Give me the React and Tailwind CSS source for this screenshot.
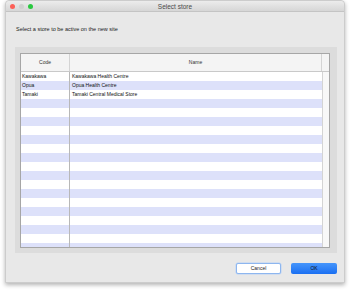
import React from 'react'

// ── Data ──────────────────────────────────────────────────────────────────────

const stores = [
  { code: 'Kawakawa', name: 'Kawakawa Health Centre' },
  { code: 'Opua', name: 'Opua Health Centre' },
  { code: 'Tamaki', name: 'Tamaki Central Medical Store' },
]

const ROW_COUNT = 20

// ── Title bar ─────────────────────────────────────────────────────────────────

function TitleBar() {
  return (
    <div className="relative flex h-[11px] items-center rounded-t-[4px] border-b border-[#c4c4c4] bg-gradient-to-b from-[#ececec] to-[#d6d6d6] px-[4px]">
      <div className="flex gap-[4px]">
        <span className="h-[5px] w-[5px] rounded-full bg-[#fc5f57]" />
        <span className="h-[5px] w-[5px] rounded-full bg-[#d0d0d0]" />
        <span className="h-[5px] w-[5px] rounded-full bg-[#2ac840]" />
      </div>
      <span className="absolute inset-x-0 text-center text-[6.5px] leading-[11px] text-[#4a4a4a]">
        Select store
      </span>
    </div>
  )
}

// ── Table ─────────────────────────────────────────────────────────────────────

function StoreTable() {
  const rows = Array.from({ length: ROW_COUNT }, (_, i) => stores[i] ?? null)

  return (
    <div className="flex h-[195px] w-[310px] flex-col border border-[#a6a6a6] bg-white">
      {/* Header */}
      <div className="flex h-[18px] shrink-0 border-b border-[#c9c9c9] bg-[#f4f4f4] text-[5px] text-[#333]">
        <div className="flex w-[49px] items-center justify-center border-r border-[#d4d4d4]">Code</div>
        <div className="flex flex-1 items-center justify-center border-r border-[#d4d4d4]">Name</div>
        <div className="w-[7px]" />
      </div>

      {/* Body */}
      <div className="flex min-h-0 flex-1">
        <div className="flex-1 overflow-hidden">
          {rows.map((store, i) => (
            <div
              key={i}
              className={`flex h-[9px] text-[5px] leading-[9px] text-[#111] ${i % 2 === 1 ? 'bg-[#dde1fa]' : 'bg-white'}`}
            >
              <div className="w-[49px] shrink-0 border-r border-[#b8b8b8] pl-[1px]">{store?.code}</div>
              <div className="flex-1 pl-[2px]">{store?.name}</div>
            </div>
          ))}
        </div>
        <div className="w-[7px] shrink-0 border-l border-[#d4d4d4] bg-[#f8f8f8]" />
      </div>
    </div>
  )
}

// ── Main ──────────────────────────────────────────────────────────────────────

export default function App() {
  return (
    <div className="h-[290px] w-[352px] bg-white font-['Liberation_Sans',Arial,sans-serif]">
      <div className="ml-[5px] flex h-[283px] w-[340px] flex-col rounded-t-[4px] border border-[#cccccc] bg-[#e8e8e8] shadow-[0_2px_4px_rgba(0,0,0,0.3)]">
        <TitleBar />

        <p className="ml-[10px] mt-[14px] text-[5.5px] leading-[6px] text-[#222]">
          Select a store to be active on the new site
        </p>

        {/* Group box */}
        <div className="ml-[9px] mt-[15px] w-[322px] bg-[#dcdcdc] pb-[5px] pl-[5px] pr-[7px] pt-[6px]">
          <StoreTable />
        </div>

        {/* Buttons */}
        <div className="mr-[7px] mt-[10px] flex justify-end gap-[10px]">
          <button className="h-[11px] w-[45px] rounded-[2px] border border-[#8db6ef] bg-white text-[5px] leading-[9px] text-[#222] shadow-[0_0_0_0.5px_#b9d2f5]">
            Cancel
          </button>
          <button className="h-[11px] w-[46px] rounded-[2px] bg-gradient-to-b from-[#4595fb] to-[#1a6ff2] text-[5px] leading-[11px] text-[#111]">
            OK
          </button>
        </div>
      </div>
    </div>
  )
}
